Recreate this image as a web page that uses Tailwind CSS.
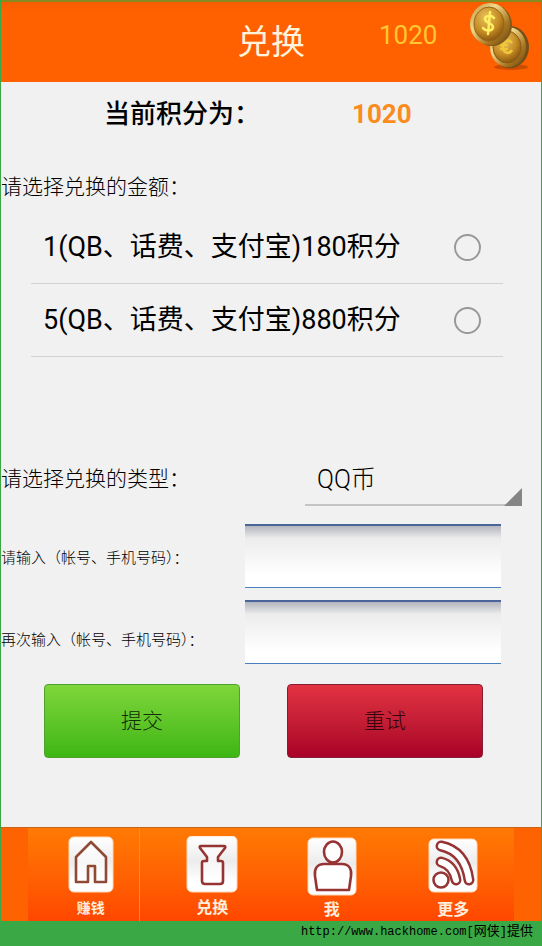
<!DOCTYPE html>
<html lang="zh-CN">
<head>
<meta charset="utf-8">
<meta name="viewport" content="width=device-width, initial-scale=1">
<title>兑换</title>
<script src="https://cdn.jsdelivr.net/npm/@tailwindcss/browser@4"></script>
</head>
<body class="min-h-screen flex flex-col bg-[#3aa845] font-[Roboto,'Noto_Sans_CJK_SC',sans-serif] text-black">
<div class="flex-1 flex flex-col mx-px bg-[#f1f1f1]">
  <header class="h-[82px] grid grid-cols-[1fr_auto_1fr] border-t-2 border-[#868a20] bg-linear-to-b from-[#f65c00] to-[#ff6000] to-10%">
    <div></div>
    <h1 class="self-center text-[34px] leading-[40px] font-normal text-[#fff3dc]">兑换</h1>
    <div class="flex justify-between pr-2.5">
      <span class="pl-[74px] pt-4 text-[26px] leading-[34px] font-normal text-[#ffc832]">1020</span>
      <svg class="w-[62px] h-[72px]" viewBox="0 0 62 72" aria-hidden="true">
        <defs>
          <radialGradient id="gold" cx=".4" cy=".3" r=".75"><stop offset="0" stop-color="#eac35c"/><stop offset=".6" stop-color="#c48a24"/><stop offset="1" stop-color="#80500c"/></radialGradient>
          <linearGradient id="rim" x1="0" y1="0" x2="1" y2="1"><stop offset="0" stop-color="#b98d38"/><stop offset=".35" stop-color="#f2d98a"/><stop offset=".7" stop-color="#a97620"/><stop offset="1" stop-color="#6e4a10"/></linearGradient>
        </defs>
        <ellipse cx="42" cy="65" rx="17" ry="3" fill="#9c3a00" opacity=".5"/>
        <ellipse cx="41" cy="45" rx="19" ry="21" fill="#745018"/>
        <ellipse cx="39" cy="45" rx="18" ry="20" fill="url(#rim)"/>
        <ellipse cx="38" cy="45" rx="14" ry="16" fill="url(#gold)" stroke="#8a5c14"/>
        <path d="M43 41c-4-5-9-1-9 4 0 6 6 8 9 3M31 43h8M31 47h8" fill="none" stroke="#f1c73a" stroke-width="2.5"/>
        <ellipse cx="23" cy="23" rx="20" ry="21" fill="#80591b"/>
        <ellipse cx="21" cy="22" rx="20" ry="21" fill="url(#rim)"/>
        <ellipse cx="20" cy="22" rx="15" ry="17" fill="url(#gold)" stroke="#94651a"/>
        <path d="M25 16c-2-3-9-3-9 1s8 4 8 8-7 5-10 1M21 10l-2 22" fill="none" stroke="#ffef62" stroke-width="2.5" stroke-linecap="round"/>
      </svg>
    </div>
  </header>

  <main class="flex-1">
    <p class="flex pt-3 pl-[103px] text-[26px] leading-[40px] font-medium">
      <span class="w-[248px]">当前积分为：</span><strong class="font-bold text-[#fa8c1e]">1020</strong>
    </p>

    <fieldset class="pt-9">
      <legend class="float-left w-full text-[21px] leading-[34px] font-light">请选择兑换的金额：</legend>
      <div class="clear-both pt-[7px] pl-[30px] pr-[38px] text-[27px] leading-[40px]">
        <label class="h-[73px] flex items-center justify-between pl-3 pr-[22px] border-b border-[#d2d2d2]">
          <span>1(QB、话费、支付宝)180积分</span>
          <input type="radio" name="amount" value="1" class="appearance-none size-[27px] rounded-full border-2 border-[#989898] checked:bg-[#989898]">
        </label>
        <label class="h-[73px] flex items-center justify-between pl-3 pr-[22px] border-b border-[#d2d2d2]">
          <span>5(QB、话费、支付宝)880积分</span>
          <input type="radio" name="amount" value="5" class="appearance-none size-[27px] rounded-full border-2 border-[#989898] checked:bg-[#989898]">
        </label>
      </div>
    </fieldset>

    <div class="flex items-center justify-between pt-[95px] pr-[19px]">
      <label for="type" class="text-[21px] leading-[34px] font-light">请选择兑换的类型：</label>
      <div class="relative w-[217px]">
        <select id="type" class="appearance-none block w-full h-[54px] pt-1 pl-3 border-b-2 border-[#c4c4c4] text-[25px] font-light bg-transparent">
          <option>QQ币</option><option>话费</option><option>支付宝</option>
        </select>
        <svg class="absolute right-0 bottom-0 w-[18px] h-[18px] pointer-events-none" viewBox="0 0 18 18" aria-hidden="true"><path d="M18 0v18H0z" fill="#858585"/></svg>
      </div>
    </div>

    <div class="flex items-center pt-[18px] pr-10">
      <label for="account" class="w-[244px] pt-1 text-[15px] leading-[24px] font-light">请输入（帐号、手机号码）：</label>
      <div class="flex-1 min-w-0 h-16 bg-[#4a7fc0] pb-px">
        <input id="account" type="text" class="block w-full h-full px-3 text-xl border-t-2 border-[#4a649c] bg-linear-to-b from-[#b4b6be] via-[#ececec] via-20% to-white to-80%">
      </div>
    </div>
    <div class="flex items-center pt-3 pr-10">
      <label for="account2" class="w-[244px] pt-4 text-[15px] leading-[24px] font-light">再次输入（帐号、手机号码）：</label>
      <div class="flex-1 min-w-0 h-16 bg-[#4a7fc0] pb-px">
        <input id="account2" type="text" class="block w-full h-full px-3 text-xl border-t-2 border-[#4a649c] bg-linear-to-b from-[#b4b6be] via-[#ececec] via-20% to-white to-80%">
      </div>
    </div>

    <div class="grid grid-cols-2 gap-[47px] pt-5 pl-[43px] pr-[58px] pb-[69px] text-[21px] font-light">
      <button type="button" class="h-[74px] pt-0.5 rounded-sm border border-[#50a030] bg-linear-to-b from-[#7ed63a] to-[#3cb612] text-[#102c08]">提交</button>
      <button type="button" class="h-[74px] pt-0.5 rounded-sm border border-[#861c36] bg-linear-to-b from-[#e23242] to-[#a80028] text-[#30060c]">重试</button>
    </div>
  </main>

  <nav class="bg-[#ff6200] border-t border-[#c46418] px-[27px]">
    <div class="h-[93px] grid grid-cols-4 bg-linear-to-b from-[#ff7a04] to-[#ff4600] text-[16px] leading-[20px] font-bold text-[#ffeedd]">
      <a href="#" class="relative flex flex-col items-center gap-[2px] pt-2 pl-1">
        <svg class="w-[52px] h-[60px]" viewBox="0 0 52 60" aria-hidden="true">
          <defs><linearGradient id="tile" x1="0" y1="0" x2="0" y2="1"><stop offset="0" stop-color="#fff"/><stop offset=".45" stop-color="#ececec"/><stop offset=".8" stop-color="#fff"/></linearGradient></defs>
          <rect x="4" y="1" width="44" height="55" rx="5" fill="url(#tile)" stroke="#ffd9b8"/>
          <path d="M26 6L11 21v25h12V30h7v16h11V21z" fill="#fff" fill-opacity=".6" stroke="#8e4a34" stroke-width="2.6" stroke-linejoin="round"/>
        </svg>
        <span class="text-[14px]">赚钱</span>
        <i class="absolute inset-y-0 right-[10px] w-px bg-[#ff8a20]"></i>
      </a>
      <a href="#" class="flex flex-col items-center gap-[2px] pt-2 pl-1">
        <svg class="w-[52px] h-[60px]" viewBox="0 0 52 60" aria-hidden="true">
          <rect x="1" y="0" width="50" height="56" rx="5" fill="url(#tile)" stroke="#ffd9b8"/>
          <path d="M15 10h23q2 0 1 2l-7 9v4h3q2 0 2 2v18q0 3-3 3H19q-3 0-3-3V27q0-2 2-2h3v-4l-7-9q-1-2 1-2z" fill="#fff" fill-opacity=".5" stroke="#963434" stroke-width="2.6" stroke-linejoin="round"/>
        </svg>
        <span>兑换</span>
      </a>
      <a href="#" class="flex flex-col items-center gap-1 pt-2">
        <svg class="w-[52px] h-[60px]" viewBox="0 0 52 60" aria-hidden="true">
          <rect x="2" y="2" width="48" height="57" rx="5" fill="url(#tile)" stroke="#ffd9b8"/>
          <ellipse cx="27" cy="16" rx="9" ry="10.5" fill="#fff" stroke="#963434" stroke-width="2.6"/>
          <path d="M18 28h18c7 0 10 5 9 12l-2 14H11L9 40c-1-7 2-12 9-12z" fill="#fff" stroke="#963434" stroke-width="2.6" stroke-linejoin="round"/>
        </svg>
        <span>我</span>
      </a>
      <a href="#" class="flex flex-col items-center gap-1 pt-2">
        <svg class="w-[52px] h-[60px]" viewBox="0 0 52 60" aria-hidden="true">
          <rect x="2" y="3" width="48" height="53" rx="5" fill="url(#tile)" stroke="#ffd9b8"/>
          <g fill="none" stroke-linecap="round">
            <path d="M14 10Q38 15 42 44M14 26Q26 29 29 44" stroke="#963434" stroke-width="11"/>
            <path d="M14 10Q38 15 42 44M14 26Q26 29 29 44" stroke="#fff" stroke-width="6"/>
          </g>
          <circle cx="14" cy="44" r="7.5" fill="#fff" stroke="#963434" stroke-width="2.6"/>
        </svg>
        <span>更多</span>
      </a>
    </div>
  </nav>
</div>
<footer class="h-[25px] pr-[9px] text-right text-[12px] leading-[22px] whitespace-nowrap font-['Liberation_Mono','Noto_Sans_CJK_SC',monospace]">http://www.hackhome.com[<span class="text-[13px]">网侠</span>]<span class="text-[13px]">提供</span></footer>
</body>
</html>
